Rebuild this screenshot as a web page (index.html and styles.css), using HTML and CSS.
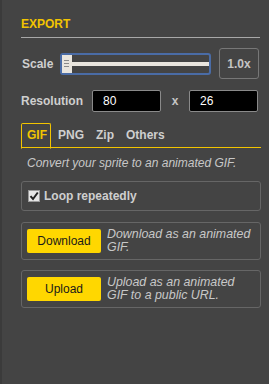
FILE: index.html
```html
<!DOCTYPE html>
<html>
<head>
<meta charset="utf-8">
<link rel="stylesheet" href="styles.css">
</head>
<body>
<div class="panel">
  <div class="title">EXPORT</div>

  <div class="row scale-row">
    <span class="label scale-label">Scale</span>
    <div class="slider">
      <div class="thumb"><i></i><i></i><i></i></div>
      <div class="track"></div>
    </div>
    <div class="scale-btn">1.0x</div>
  </div>

  <div class="row res-row">
    <span class="label res-label">Resolution</span>
    <div class="input">80</div>
    <span class="times">x</span>
    <div class="input">26</div>
  </div>

  <div class="tabs">
    <div class="tab active">GIF</div>
    <div class="tab">PNG</div>
    <div class="tab">Zip</div>
    <div class="tab">Others</div>
  </div>

  <div class="desc">Convert your sprite to an animated GIF.</div>

  <div class="box loop-box">
    <span class="check">
      <svg width="10" height="10" viewBox="0 0 10 10"><path d="M1.5 5.2 L4 8 L8.8 1.5" fill="none" stroke="#222" stroke-width="2"/></svg>
    </span>
    <span class="label">Loop repeatedly</span>
  </div>

  <div class="box action-box">
    <div class="btn">Download</div>
    <div class="note">Download as an animated GIF.</div>
  </div>

  <div class="box action-box">
    <div class="btn">Upload</div>
    <div class="note">Upload as an animated GIF to a public URL.</div>
  </div>
</div>
</body>
</html>
```

FILE: styles.css
```css
html, body {
  margin: 0;
  padding: 0;
}
body {
  background: #444444;
  width: 269px;
  height: 384px;
  overflow: hidden;
  font-family: "Liberation Sans", Arial, sans-serif;
  font-size: 12px;
  color: #cccccc;
}
.panel {
  height: 384px;
  box-sizing: border-box;
  border-left: 2px solid #3b3b3b;
  padding: 17px 9px 0 19px;
}
.title {
  color: #f2c400;
  font-weight: bold;
  line-height: 14px;
  padding-bottom: 6px;
  border-bottom: 1px solid #a8a8a8;
}
.row {
  display: flex;
  align-items: center;
}
.label {
  font-weight: bold;
  color: #cfcfcf;
}
.scale-row {
  margin-top: 10px;
  height: 31px;
  padding-left: 1px;
}
.scale-label {
  width: 38px;
}
.slider {
  width: 151px;
  height: 22px;
  box-sizing: border-box;
  border: 2px solid #4a6ca6;
  border-radius: 3px;
  display: flex;
  align-items: center;
}
.thumb {
  width: 10px;
  height: 18px;
  background: #e9e5de;
  display: flex;
  flex-direction: column;
  justify-content: center;
  gap: 2px;
  padding-left: 2px;
  box-sizing: border-box;
}
.thumb i {
  display: block;
  width: 5px;
  height: 1px;
  background: #8a8a8a;
}
.track {
  flex: 1;
  height: 4px;
  background: #e9e5de;
}
.scale-btn {
  margin-left: 8px;
  width: 40px;
  height: 31px;
  box-sizing: border-box;
  border: 1px solid #777777;
  border-radius: 3px;
  display: flex;
  align-items: center;
  justify-content: center;
  font-weight: bold;
  color: #c4c4c4;
}
.res-row {
  margin-top: 11px;
  height: 22px;
}
.res-label {
  width: 71px;
}
.input {
  width: 69px;
  height: 22px;
  box-sizing: border-box;
  background: #000;
  border: 1px solid #8a8a8a;
  border-radius: 2px;
  color: #fff;
  padding-left: 10px;
  line-height: 20px;
}
.times {
  width: 28px;
  text-align: center;
  font-weight: bold;
  color: #c4c4c4;
}
.tabs {
  margin-top: 11px;
  display: flex;
  height: 24px;
  border-bottom: 1px solid #f2c400;
  margin-right: -1px;
}
.tab {
  font-weight: bold;
  color: #cfcfcf;
  line-height: 24px;
  padding: 0 6px;
}
.tab.active {
  color: #f2c400;
  border: 1px solid #f2c400;
  border-bottom: 1px solid #444444;
  border-radius: 2px 2px 0 0;
  padding: 0 3px 0 5px;
  height: 24px;
  line-height: 23px;
  margin-right: 1px;
}
.desc {
  margin-top: 8px;
  padding-left: 6px;
  font-style: italic;
  line-height: 14px;
  color: #c8c8c8;
}
.box {
  border: 1px solid #666666;
  border-radius: 3px;
}
.loop-box {
  margin-top: 11px;
  height: 30px;
  box-sizing: border-box;
  display: flex;
  align-items: center;
  padding-left: 6px;
  margin-right: -1px;
}
.check {
  width: 12px;
  height: 12px;
  box-sizing: border-box;
  background: #e6e6e6;
  border: 1px solid #9a9a9a;
  display: flex;
  align-items: center;
  justify-content: center;
  margin-right: 4px;
}
.action-box {
  margin-top: 11px;
  display: flex;
  align-items: flex-start;
  padding: 5px 6px 5px 5px;
  margin-right: -1px;
}
.action-box + .action-box {
  margin-top: 10px;
}
.btn {
  flex: none;
  width: 74px;
  height: 24px;
  margin-top: 1px;
  margin-bottom: 1px;
  background: #ffd700;
  border-radius: 2px;
  color: #1a1a1a;
  text-align: center;
  line-height: 24px;
}
.note {
  margin-left: 6px;
  font-style: italic;
  font-size: 12.4px;
  line-height: 13px;
  color: #c8c8c8;
}
```
